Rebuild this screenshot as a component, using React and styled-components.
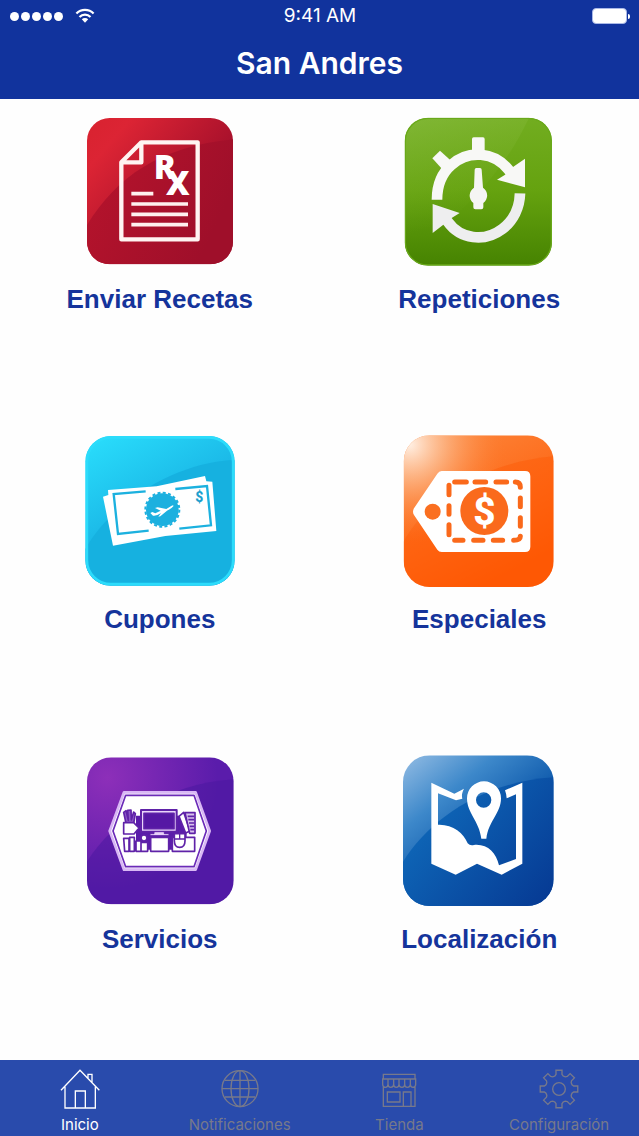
import React from 'react'
import styled, { createGlobalStyle } from 'styled-components';


const GlobalStyle = createGlobalStyle`
* {
  box-sizing: border-box;
}
body {
  margin: 0;
  background: #fefefe;
}
`

const gearPath = (cx, cy) => {
    const points = [];
    for (let i = 0; i < 8; i++) {
        const a = (i * Math.PI) / 4 - Math.PI / 2;
        // angle offset and radius of each corner of one tooth
        [[-0.31, 41], [-0.2, 45], [-0.16, 57], [0.16, 57], [0.2, 45], [0.31, 41]].forEach(([d, r]) => {
            points.push(`${(cx + r * Math.cos(a + d)).toFixed(1)} ${(cy + r * Math.sin(a + d)).toFixed(1)}`);
        });
    }
    return `M${points.join('L')}Z`;
}

const RecetasIcon = () => (
    <TileIcon viewBox="72 15 456 456" aria-hidden="true">
        <defs>
            <linearGradient id="red" x1="0" y1="0" x2="0.7" y2="0.6">
                <stop offset="0" stopColor="#d8222f" />
                <stop offset="0.25" stopColor="#dc2434" />
                <stop offset="1" stopColor="#a30f2b" />
            </linearGradient>
            <linearGradient id="redLow" x1="0" y1="0" x2="1" y2="0.4">
                <stop offset="0" stopColor="#b8142c" />
                <stop offset="1" stopColor="#9f0f2a" />
            </linearGradient>
            <clipPath id="redClip"><rect x="81" y="24" width="438" height="439" rx="68" /></clipPath>
        </defs>
        <g clipPath="url(#redClip)">
            <rect x="81" y="24" width="438" height="439" fill="url(#red)" />
            <path d="M81 345C170 200 300 110 519 88V463H81Z" fill="url(#redLow)" />
        </g>
        <path d="M244 97H413V388H184V157Z M244 97V157H184" fill="none" stroke="#fff4f2" strokeWidth="13" strokeLinejoin="round" />
        <path d="M214 251H280M214 282H384M214 313H384M214 344H384" stroke="#fff0ee" strokeWidth="11" />
        <IconText x="281" y="206" $size={98}>R<tspan x="318" y="255">X</tspan></IconText>
    </TileIcon>
)

const RepeticionesIcon = () => (
    <TileIcon viewBox="72 15 456 456" aria-hidden="true">
        <defs>
            <linearGradient id="green" x1="0" y1="0" x2="0" y2="1">
                <stop offset="0" stopColor="#72ad20" />
                <stop offset="0.5" stopColor="#65a20f" />
                <stop offset="1" stopColor="#468301" />
            </linearGradient>
            <linearGradient id="greenGloss" x1="0" y1="0" x2="0.3" y2="1">
                <stop offset="0" stopColor="#8fc04a" stopOpacity="0.5" />
                <stop offset="0.8" stopColor="#7fb52d" stopOpacity="0" />
            </linearGradient>
            <clipPath id="greenClip"><rect x="77" y="23" width="442" height="444" rx="70" /></clipPath>
        </defs>
        <g clipPath="url(#greenClip)">
            <rect x="77" y="23" width="442" height="444" fill="url(#green)" />
            <path d="M77 23H450C400 130 300 290 77 430Z" fill="url(#greenGloss)" />
            <rect x="79" y="25" width="438" height="440" rx="68" fill="none" stroke="#69a91a" strokeWidth="4" />
        </g>
        <path d="M174 269C174 225 190 188 218 164C268 119 346 124 390 181L402 198" fill="none" stroke="#f8f8f6" strokeWidth="32" />
        <path d="M423 250C422 292 403 332 370 357C316 398 244 388 206 335L194 318" fill="none" stroke="#eeeeef" strokeWidth="32" />
        <path d="M438 146V232L354 209L382 192L402 171Z" fill="#f8f8f6" />
        <path d="M161 282L242 309L218 324L192 345L161 369Z" fill="#eeeeef" />
        <path d="M160 145L183 122L216 152L192 180Z" fill="#f8f8f6" />
        <rect x="279" y="82" width="38" height="55" rx="5" fill="#f8f8f6" />
        <path d="M287 179Q287 174 292 174H303Q308 174 308 179L312 233A28 28 0 0 1 313 279V292Q313 298 307 298H289Q283 298 283 292V279A28 28 0 0 1 285 233Z" fill="#f5f5f3" />
    </TileIcon>
)

const CuponesIcon = () => (
    <TileIcon viewBox="72 30 456 456" aria-hidden="true">
        <defs>
            <linearGradient id="cyan" x1="0.1" y1="0" x2="0.5" y2="0.7">
                <stop offset="0" stopColor="#29dcfb" />
                <stop offset="1" stopColor="#16ace0" />
            </linearGradient>
            <clipPath id="cyanClip"><rect x="76" y="33" width="448" height="449" rx="76" /></clipPath>
        </defs>
        <g clipPath="url(#cyanClip)">
            <rect x="76" y="33" width="448" height="449" fill="url(#cyan)" />
            <path d="M76 372C150 240 330 115 524 104V482H76Z" fill="#16b1e0" />
            <rect x="80" y="37" width="440" height="441" rx="73" fill="none" stroke="#2cdcfb" strokeWidth="9" />
        </g>
        <path d="M129 215L145 210L144 195L290 184L435 153L439 169L457 170L469 318L316 333L159 362Z" fill="#fff" />
        <path d="M257 199L161 207L174 327L266 317M346 192L441 183L453 301L358 311" fill="none" stroke="#1cb1df" strokeWidth="7" />
        <circle cx="307" cy="254" r="49" fill="#1cb0df" />
        <circle cx="307" cy="254" r="51" fill="none" stroke="#1cb0df" strokeWidth="6" strokeDasharray="9 7" />
        <path d="M271 264L277 261L286 265L302 257L285 249L293 247L319 252L335 242Q342 239 340 244Q336 250 321 257L301 274L295 275L303 264Q289 274 279 272Z" fill="#fff" />
        <MoneyText x="406" y="232" $size={42} $color="#1c9fce">$</MoneyText>
    </TileIcon>
)

const EspecialesIcon = () => (
    <TileIcon viewBox="72 30 456 456" aria-hidden="true">
        <defs>
            <linearGradient id="orange" x1="0" y1="0" x2="0.5" y2="1">
                <stop offset="0" stopColor="#fc8a40" />
                <stop offset="1" stopColor="#ff5500" />
            </linearGradient>
            <radialGradient id="orangeGlow" cx="0.04" cy="0.06" r="0.65">
                <stop offset="0" stopColor="#fff0e4" />
                <stop offset="0.35" stopColor="#fdc49c" stopOpacity="0.7" />
                <stop offset="1" stopColor="#fc7a2a" stopOpacity="0" />
            </radialGradient>
            <clipPath id="orangeClip"><rect x="74" y="31" width="450" height="455" rx="78" /></clipPath>
        </defs>
        <g clipPath="url(#orangeClip)">
            <rect x="74" y="31" width="450" height="455" fill="url(#orange)" />
            <path d="M74 350C150 210 330 110 524 94V486H74Z" fill="#fe5c08" opacity="0.5" />
            <rect x="74" y="31" width="450" height="455" fill="url(#orangeGlow)" />
        </g>
        <path d="M188 138H438Q454 138 454 154V365Q454 381 438 381H188Q180 381 175 374L105 270Q99 260 105 250L175 146Q180 138 188 138Z" fill="#fff" />
        <circle cx="161" cy="260" r="24" fill="#fa6f20" />
        <path d="M227 171H262M288 171H320M351 171H383M409 171Q424 171 424 187M424 219V245M424 278V304M424 334Q424 346 404 346M371 346H343M312 346H284M252 346H227M210 329V299M210 268V242M210 209V181" fill="none" stroke="#fa691b" strokeWidth="15" strokeLinecap="round" />
        <circle cx="316" cy="258" r="72" fill="#fa6a1c" />
        <MoneyText x="283" y="299" $size={116}>$</MoneyText>
    </TileIcon>
)

const ServiciosIcon = () => (
    <TileIcon viewBox="72 30 456 456" aria-hidden="true">
        <defs>
            <radialGradient id="purple" cx="0.14" cy="0.14" r="0.75">
                <stop offset="0" stopColor="#8d2fb9" />
                <stop offset="1" stopColor="#5a1cab" />
            </radialGradient>
            <clipPath id="purpleClip"><rect x="81" y="37" width="440" height="441" rx="72" /></clipPath>
        </defs>
        <g clipPath="url(#purpleClip)">
            <rect x="81" y="37" width="440" height="441" fill="url(#purple)" />
            <path d="M81 350C160 225 320 115 521 103V478H81Z" fill="#4a17a0" opacity="0.55" />
        </g>
        <path d="M192 142H407L449 258L407 374H192L149 258Z" fill="#fff" stroke="#d9b8f5" strokeWidth="8" strokeLinejoin="round" />
        <path d="M197 151H402L439 258L402 365H197L159 258Z" fill="none" stroke="#6b2ab8" strokeWidth="5" strokeLinejoin="round" />
        <g stroke="#5f22a8" strokeWidth="5" strokeLinejoin="round" fill="#fff">
            <path d="M228 212H380V314H228Z" fill="#5a1caa" stroke="none" />
            <path d="M198 235L191 202L198 197L205 226L203 196L213 195L214 225L221 201L226 206L221 236Z" fill="#8d5ac6" />
            <path d="M191 233H221L237 249L222 267H191Z" />
            <path d="M243 195H350V260H243Z" fill="#ead6fa" strokeWidth="6" />
            <path d="M252 205H342V251H252Z" fill="#5518a4" />
            <path d="M282 260H313V266H327V272H270V266H282Z" fill="#e8d0fa" strokeWidth="3" />
            <path d="M357 214L371 202L390 258L377 264Z" />
            <path d="M375 203H405V265H389Z" fill="#d9c2ed" />
            <path d="M383 214H403M385 224H403M387 234H403M389 244H403M391 254H403" />
            <path d="M191 280H207V319H194ZM209 277H223V319H209ZM228 288H243V319H228ZM243 292H263V319H243Z" />
            <circle cx="252" cy="279" r="9" />
            <path d="M272 277H326V319H272ZM337 277H404V319H337Z" />
            <path d="M343 266H375V287Q375 307 359 307Q343 307 343 287Z" />
            <path d="M343 282H375M359 266V282M359 254V266" strokeWidth="4" />
        </g>
    </TileIcon>
)

const LocalizacionIcon = () => (
    <TileIcon viewBox="72 30 456 456" aria-hidden="true">
        <defs>
            <linearGradient id="blue" x1="0" y1="0" x2="0.8" y2="1">
                <stop offset="0" stopColor="#94bde4" />
                <stop offset="0.3" stopColor="#3d88ca" />
                <stop offset="0.6" stopColor="#0f5aac" />
                <stop offset="1" stopColor="#0650a8" />
            </linearGradient>
            <linearGradient id="blueLow" x1="0" y1="0.3" x2="1" y2="1">
                <stop offset="0" stopColor="#0f6bbb" />
                <stop offset="1" stopColor="#063892" />
            </linearGradient>
            <clipPath id="blueClip"><rect x="72" y="31" width="452" height="452" rx="80" /></clipPath>
        </defs>
        <g clipPath="url(#blueClip)">
            <rect x="72" y="31" width="452" height="452" fill="url(#blue)" />
            <path d="M72 350C150 225 310 110 524 97V483H72Z" fill="url(#blueLow)" />
        </g>
        <path fillRule="evenodd" d="M157 113L226 146L255 131C248 145 248 152 250 161L231 166L177 145V239C220 237 254 263 266 295Q273 303 285 300C325 296 351 323 360 361L411 342V148L383 160Q382 146 378 136L430 113V356L368 389L294 356L230 389L157 356Z" fill="#fff" />
        <path fillRule="evenodd" d="M307 281C300 226 264 205 264 160A51 51 0 0 1 366 160C366 205 329 226 322 281ZM314 142A23 23 0 1 0 314 188A23 23 0 1 0 314 142Z" fill="#fff" />
    </TileIcon>
)

const HomeIcon = () => (
    <TabIcon viewBox="180 58 120 120" aria-hidden="true">
        <path d="M183 122L240 62L298 122M195 111V175H286V111M226 175V124H256V175M264 85V74H276V98" />
    </TabIcon>
)

const GlobeIcon = () => (
    <TabIcon viewBox="658 58 120 120" aria-hidden="true">
        <circle cx="718" cy="117" r="54" />
        <ellipse cx="718" cy="117" rx="27" ry="54" />
        <path d="M718 63V171M664 117H772M673 92H763M673 142H763" />
    </TabIcon>
)

const StoreIcon = () => (
    <TabIcon viewBox="178 58 120 120" aria-hidden="true">
        <path d="M191 88V74H286V88M191 112V170H286V112M189 88H288V104Q288 113 280 113Q272 113 272 104Q272 113 263 113Q255 113 255 104Q255 113 247 113Q238 113 238 104Q238 113 230 113Q222 113 222 104Q222 113 213 113Q205 113 205 104Q205 113 197 113Q189 113 189 104ZM205 88V104M222 88V104M238 88V104M255 88V104M272 88V104M203 127H241V157H203ZM251 170V127H274V170" />
    </TabIcon>
)

const GearIcon = () => (
    <TabIcon viewBox="657 58 120 120" aria-hidden="true">
        <path d={gearPath(717, 118)} />
        <circle cx="717" cy="118" r="19" />
    </TabIcon>
)

const tilesData = [
    { title: 'Enviar Recetas', icon: <RecetasIcon /> },
    { title: 'Repeticiones', icon: <RepeticionesIcon /> },
    { title: 'Cupones', icon: <CuponesIcon /> },
    { title: 'Especiales', icon: <EspecialesIcon /> },
    { title: 'Servicios', icon: <ServiciosIcon /> },
    { title: 'Localización', icon: <LocalizacionIcon /> },
]

const tabsData = [
    { title: 'Inicio', icon: <HomeIcon />, active: true },
    { title: 'Notificaciones', icon: <GlobeIcon /> },
    { title: 'Tienda', icon: <StoreIcon /> },
    { title: 'Configuración', icon: <GearIcon /> },
]

const App = () => {
    return (
        <Screen>
            <GlobalStyle />
            <Header>
                <StatusBar>
                    <Signal>
                        <Dots>
                            {[0, 1, 2, 3, 4].map((dot) => <Dot key={dot} />)}
                        </Dots>
                        <svg width="20" height="16" viewBox="0 0 20 16" aria-hidden="true">
                            <path d="M1.4 5.6A12 12 0 0 1 18.6 5.6M4.5 9A7.6 7.6 0 0 1 15.5 9" fill="none" stroke="#fff" strokeWidth="2.2" />
                            <path d="M6.8 11.3A4.6 4.6 0 0 1 13.2 11.3L10 14.8Z" fill="#fff" />
                        </svg>
                    </Signal>
                    <Time>9:41 AM</Time>
                    <Power>
                        <Battery />
                        <BatteryTip />
                    </Power>
                </StatusBar>
                <Heading>San Andres</Heading>
            </Header>
            <TileGrid>
                {tilesData.map((item) => (
                    <Tile key={item.title} type="button">
                        {item.icon}
                        <TileTitle>{item.title}</TileTitle>
                    </Tile>
                ))}
            </TileGrid>
            <TabBar>
                {tabsData.map((item) => (
                    <Tab key={item.title} href="#" $active={item.active}>
                        {item.icon}
                        {item.title}
                    </Tab>
                ))}
            </TabBar>
        </Screen>
    )
}

export default App;

const Screen = styled.div`
min-height: 100vh;
display: flex;
flex-direction: column;
font-family: Inter, "Liberation Sans", sans-serif;
`
const Header = styled.header`
height: 99px;
background: #11339d;
color: #fff;
`
const StatusBar = styled.div`
height: 32px;
padding: 0 9px 0 10px;
display: grid;
grid-template-columns: 1fr auto 1fr;
align-items: center;
`
const Signal = styled.div`
display: flex;
align-items: center;
gap: 12px;
`
const Dots = styled.div`
display: flex;
gap: 2px;
`
const Dot = styled.span`
width: 9px;
height: 9px;
border-radius: 50%;
background: #fff;
`
const Time = styled.span`
font-size: 19px;
line-height: 32px;
`
const Power = styled.div`
display: flex;
align-items: center;
justify-content: flex-end;
gap: 1px;
`
const Battery = styled.span`
width: 35px;
height: 16px;
border: 1px solid #a9b8e6;
border-radius: 4px;
background: #fff;
`
const BatteryTip = styled.span`
width: 2px;
height: 5px;
border-radius: 0 2px 2px 0;
background: #fff;
`
const Heading = styled.h1`
margin: 0;
text-align: center;
font-size: 30px;
font-weight: 600;
line-height: 62px;
`
const TileGrid = styled.main`
flex: 1;
display: grid;
grid-template-columns: repeat(2, 1fr);
grid-auto-rows: 320px;
`
const Tile = styled.button`
display: flex;
flex-direction: column;
align-items: center;
justify-content: flex-start;
gap: 16px;
padding: 16px 0;
border: 0;
background: none;
cursor: pointer;
`
const TileIcon = styled.svg`
display: block;
width: 152px;
height: 152px;
`
const IconText = styled.text`
font-family: "Open Sans", "Liberation Sans", sans-serif;
font-size: ${(props) => props.$size}px;
font-weight: 800;
fill: ${(props) => props.$color || '#fff'};
`
const MoneyText = styled(IconText)`
font-family: Roboto, "Liberation Sans", sans-serif;
`
const TileTitle = styled.span`
color: #15349b;
font-family: "Liberation Sans", Arial, sans-serif;
font-size: 26px;
font-weight: 700;
line-height: 32px;
`
const TabBar = styled.nav`
height: 76px;
display: grid;
grid-template-columns: repeat(4, 1fr);
background: #294bac;
`
const Tab = styled.a`
display: flex;
flex-direction: column;
align-items: center;
gap: 5px;
padding-top: 9px;
color: ${(props) => (props.$active ? '#fff' : '#77798b')};
font-size: 15px;
line-height: 22px;
text-decoration: none;
`
const TabIcon = styled.svg`
display: block;
width: 40px;
height: 40px;
fill: none;
stroke: currentColor;
stroke-width: 4px;
`
